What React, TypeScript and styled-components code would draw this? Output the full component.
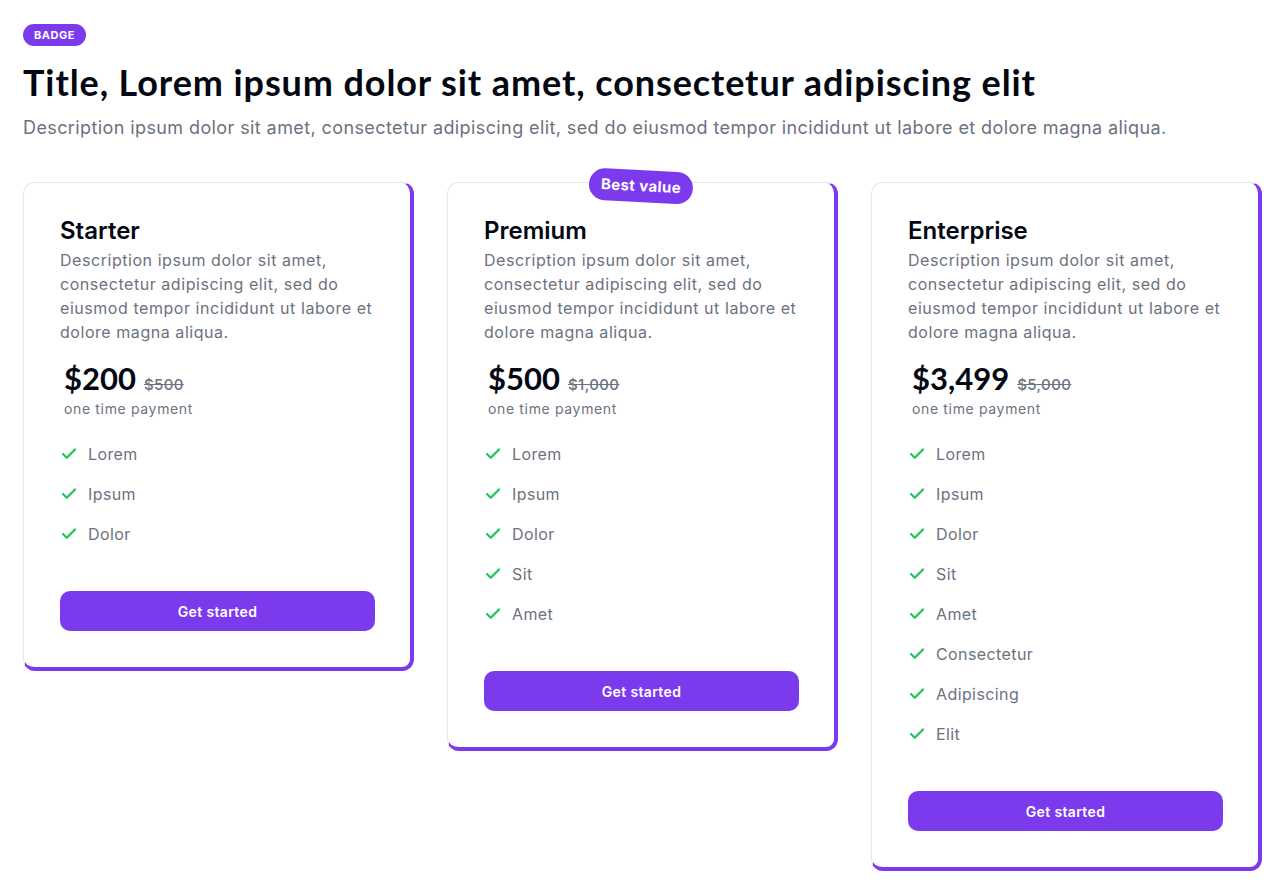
import React from "react";
import styled, { createGlobalStyle } from "styled-components";

const GlobalStyle = createGlobalStyle`
  * { box-sizing: border-box; }
  body {
    margin: 0;
    background: #ffffff;
    font-family: "Inter", "Open Sans", sans-serif;
    color: #030712;
  }
`;

const Page = styled.main`
  padding: 24px 24px 24px 23px;
  display: flex;
  flex-direction: column;
`;

const Header = styled.header`
  display: flex;
  flex-direction: column;
  align-items: flex-start;
`;

const Badge = styled.span`
  display: inline-flex;
  align-items: center;
  height: 22px;
  padding: 0 11px;
  border-radius: 999px;
  background: #7c3aed;
  color: #ffffff;
  font-size: 11px;
  font-weight: 700;
  letter-spacing: 0.5px;
  text-transform: uppercase;
`;

const Title = styled.h1`
  margin: 16px 0 0;
  font-family: "Lato", sans-serif;
  font-size: 36px;
  line-height: 40px;
  font-weight: 700;
  letter-spacing: 0.9px;
  color: #030712;
`;

const Lead = styled.p`
  margin: 12px 0 0;
  font-size: 18px;
  line-height: 28px;
  letter-spacing: 0.4px;
  color: #6b7280;
`;

const Grid = styled.section`
  margin-top: 40px;
  display: grid;
  grid-template-columns: repeat(3, 1fr);
  gap: 33px;
  align-items: start;
`;

const Card = styled.article`
  position: relative;
  display: flex;
  flex-direction: column;
  padding: 32px 35px 36px 36px;
  background: #ffffff;
  border: 1px solid #e5e7eb;
  border-right: 4px solid #7c3aed;
  border-bottom: 4px solid #7c3aed;
  border-radius: 12px;
`;

const Ribbon = styled.span`
  position: absolute;
  top: 0;
  left: 50%;
  transform: translate(-50%, -40%) rotate(3deg);
  padding: 6px 12px;
  border-radius: 999px;
  background: #7c3aed;
  color: #ffffff;
  font-size: 15px;
  line-height: 20px;
  font-weight: 700;
  letter-spacing: 0.4px;
  white-space: nowrap;
`;

const PlanName = styled.h2`
  margin: 0;
  font-size: 24px;
  line-height: 32px;
  font-weight: 600;
  color: #030712;
`;

const PlanDesc = styled.p`
  margin: 1px 0 0;
  font-size: 16px;
  line-height: 24px;
  letter-spacing: 0.55px;
  color: #6b7280;
`;

const PriceBlock = styled.div`
  margin-top: 16px;
  padding-left: 4px;
  display: flex;
  flex-direction: column;
  gap: 3px;
`;

const PriceRow = styled.div`
  display: flex;
  align-items: baseline;
  gap: 8px;
`;

const Price = styled.span`
  font-family: "Lato", sans-serif;
  font-size: 31px;
  line-height: 36px;
  font-weight: 700;
  color: #030712;
`;

const OldPrice = styled.s`
  font-size: 15px;
  font-weight: 500;
  letter-spacing: 0.4px;
  color: #6b7280;
`;

const PriceNote = styled.span`
  font-size: 14px;
  line-height: 20px;
  letter-spacing: 0.65px;
  color: #6b7280;
`;

const Features = styled.ul`
  list-style: none;
  margin: 23px 0 0;
  padding: 0;
  display: flex;
  flex-direction: column;
  gap: 16px;
`;

const Feature = styled.li`
  display: flex;
  align-items: center;
  gap: 10px;
  font-size: 16px;
  line-height: 24px;
  letter-spacing: 0.4px;
  color: #6b7280;
`;

const CheckIcon = styled.svg`
  flex: none;
  width: 18px;
  height: 18px;
`;

const Button = styled.button`
  margin-top: 45px;
  height: 40px;
  border: 0;
  border-radius: 10px;
  background: #7c3aed;
  color: #ffffff;
  font-family: inherit;
  font-size: 14px;
  font-weight: 600;
  letter-spacing: 0.35px;
  cursor: pointer;
`;

const Check = () => (
  <CheckIcon viewBox="0 0 24 24" fill="none" stroke="#22c55e" strokeWidth={3} strokeLinecap="round" strokeLinejoin="round">
    <path d="M20 6 9 17l-5-5" />
  </CheckIcon>
);

const desc =
  "Description ipsum dolor sit amet, consectetur adipiscing elit, sed do eiusmod tempor incididunt ut labore et dolore magna aliqua.";

const plans = [
  { name: "Starter", price: "$200", old: "$500", features: ["Lorem", "Ipsum", "Dolor"] },
  { name: "Premium", price: "$500", old: "$1,000", ribbon: "Best value", features: ["Lorem", "Ipsum", "Dolor", "Sit", "Amet"] },
  {
    name: "Enterprise",
    price: "$3,499",
    old: "$5,000",
    features: ["Lorem", "Ipsum", "Dolor", "Sit", "Amet", "Consectetur", "Adipiscing", "Elit"],
  },
];

export default function App() {
  return (
    <>
      <GlobalStyle />
      <Page>
        <Header>
          <Badge>Badge</Badge>
          <Title>Title, Lorem ipsum dolor sit amet, consectetur adipiscing elit</Title>
          <Lead>{desc}</Lead>
        </Header>
        <Grid>
          {plans.map((p) => (
            <Card key={p.name}>
              {p.ribbon && <Ribbon>{p.ribbon}</Ribbon>}
              <PlanName>{p.name}</PlanName>
              <PlanDesc>{desc}</PlanDesc>
              <PriceBlock>
                <PriceRow>
                  <Price>{p.price}</Price>
                  <OldPrice>{p.old}</OldPrice>
                </PriceRow>
                <PriceNote>one time payment</PriceNote>
              </PriceBlock>
              <Features>
                {p.features.map((f) => (
                  <Feature key={f}>
                    <Check />
                    {f}
                  </Feature>
                ))}
              </Features>
              <Button>Get started</Button>
            </Card>
          ))}
        </Grid>
      </Page>
    </>
  );
}
